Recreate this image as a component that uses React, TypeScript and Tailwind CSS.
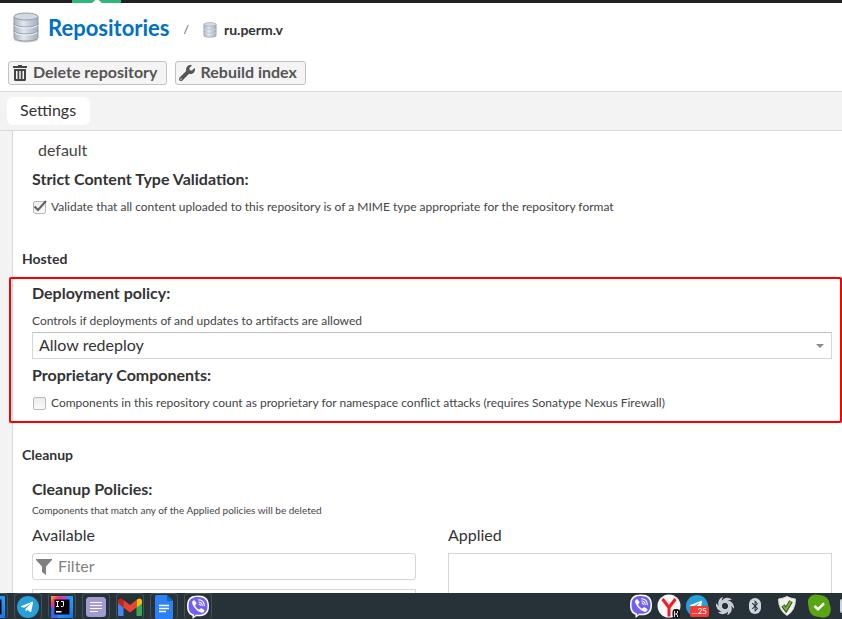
import React from "react";
import type { ReactNode } from "react";
import { FaBluetoothB, FaTelegramPlane, FaWrench } from "react-icons/fa";

function DatabaseIcon({ className }: { className: string }) {
  return (
    <svg className={className} viewBox="0 0 26 31" aria-hidden="true">
      <defs>
        <linearGradient id="metal" x1="0" x2="1" y1="0" y2="0">
          <stop offset="0" stopColor="#a9b3bf" />
          <stop offset="0.4" stopColor="#e1e6ec" />
          <stop offset="1" stopColor="#a3adb9" />
        </linearGradient>
      </defs>
      <ellipse cx="13" cy="27.5" rx="12" ry="3" fill="#9a9a9a" opacity="0.5" />
      <path d="M1 4.5v21c0 2 5 3.500 12 3.500s12-1.500 12-3.500v-21z" fill="url(#metal)" stroke="#919cab" />
      <ellipse cx="13" cy="4.500" rx="12" ry="3.500" fill="#d3d9e1" stroke="#919cab" />
      <path d="M1 11.500c0 2 5 3.500 12 3.500s12-1.500 12-3.500M1 18.500c0 2 5 3.500 12 3.500s12-1.500 12-3.500" fill="none" stroke="#8b96a4" />
      <path d="M1.500 13c1 1.800 5.500 3 11.500 3s10.500-1.200 11.500-3M1.500 20c1 1.800 5.500 3 11.500 3s10.500-1.200 11.500-3" fill="none" stroke="#f5f7fa" />
    </svg>
  );
}

function TrashIcon() {
  return (
    <svg className="h-4 w-[14px]" viewBox="0 0 14 16" fill="#444" aria-hidden="true">
      <path d="M5 0h4v1h4.500q.5 0 .5.500V3H0V1.500Q0 1 .5 1H5z" />
      <path fillRule="evenodd" d="M1 4h12v10.500q0 1.500-1.500 1.500h-9Q1 16 1 14.500zM3 6v8h1.500V6zM6.250 6v8h1.500V6zM9.500 6v8H11V6z" />
    </svg>
  );
}

function ViberIcon() {
  return (
    <svg className="size-6" viewBox="0 0 24 24" aria-hidden="true">
      <path d="M12 .5C4.500.5 1 3.500 1 11c0 5.500 2 8.700 5.500 9.800V24l3.500-2.700h2c7.500 0 11-3 11-10.300S19.500.5 12 .5z" fill="#fff" />
      <path d="M12 2C5.500 2 2.500 4.500 2.500 11c0 5 2 7.500 5.500 8.500v2l2-1.700h2c6.500 0 9.500-2.500 9.500-8.800S18.500 2 12 2z" fill="#7360f2" />
      <path d="M7.300 5.500c.7-.4 1.300-.2 1.700.4l1.300 1.900c.4.700.2 1.200-.4 1.700-.8.600-.9 1-.5 1.800.7 1.400 1.700 2.400 3 3 .8.400 1.200.2 1.700-.5.500-.7 1.100-.8 1.800-.4l1.900 1.300c.7.500.8 1.100.4 1.800-.8 1.300-1.800 1.700-3.200 1.100-4-1.800-6.900-4.700-8.600-8.700-.6-1.500-.3-2.600.9-3.400z" fill="#fff" />
      <path d="M12.500 4.800c3.700.1 5.700 2.200 5.800 6M12.800 7c2.200.2 3.300 1.400 3.400 3.600M13 9c.8.100 1.200.5 1.300 1.400" fill="none" stroke="#fff" strokeLinecap="round" strokeWidth="1.100" />
    </svg>
  );
}

function IdeaIcon() {
  return (
    <svg className="size-[22px]" viewBox="0 0 22 22" aria-hidden="true">
      <defs>
        <linearGradient id="idea" x1="0" x2="1" y1="0" y2="1">
          <stop offset="0" stopColor="#fcb02a" />
          <stop offset="0.200" stopColor="#f0307c" />
          <stop offset="0.450" stopColor="#8a5cf5" />
          <stop offset="0.700" stopColor="#1b8bff" />
          <stop offset="1" stopColor="#1672e8" />
        </linearGradient>
      </defs>
      <path d="M0 0h22v22H0z" fill="url(#idea)" />
      <path d="M15 0h7v15l-3-8z" fill="#1d98fb" />
      <path d="M0 10l7 7-1 5H0z" fill="#3268e8" />
      <path d="M3.500 3.500h15v15h-15z" fill="#0b0509" />
      <path d="M5 5.500h3M5 10.500h3M6.500 5.500v5M10 5.500h2.500v4q0 1-1 1H10" fill="none" stroke="#fff" />
      <path d="M5 15h5.500v1.500H5z" fill="#fff" />
    </svg>
  );
}

function TelegramIcon() {
  return (
    <span className="flex size-[22px] items-center justify-center rounded-full bg-[#279fd9] text-white">
      <FaTelegramPlane className="mr-0.5 size-3.5" />
    </span>
  );
}

function NotesIcon() {
  return (
    <svg className="size-5" viewBox="0 0 20 20" aria-hidden="true">
      <rect width="20" height="20" rx="3.500" fill="#a49bd5" />
      <path d="M4 5.500h12M4 8.500h12M4 11.500h12M4 14.500h8" stroke="#fff" strokeWidth="1.200" />
    </svg>
  );
}

function GmailIcon() {
  return (
    <svg className="h-[18px] w-6" viewBox="0 0 24 18" aria-hidden="true">
      <path d="M0 4l5.500 4v10H1.500Q0 18 0 16.500z" fill="#4285f4" />
      <path d="M24 4l-5.500 4v10h4q1.500 0 1.500-1.500z" fill="#34a853" />
      <path d="M18.500 2l1.300-1C21.500-.3 24 .6 24 3v2.500L18.500 9.600z" fill="#fbbc04" />
      <path d="M5.500 2L4.200 1C2.500-.3 0 .6 0 3v2.500l5.500 4.100z" fill="#c5221f" />
      <path d="M5.500 2L12 6.900 18.500 2v7.600L12 14.500 5.500 9.600z" fill="#ea4335" />
    </svg>
  );
}

function DocsIcon() {
  return (
    <svg className="h-6 w-[18px]" viewBox="0 0 18 24" aria-hidden="true">
      <path d="M1.500 0H12l6 6v16.500q0 1.500-1.500 1.500h-15Q0 24 0 22.500v-21Q0 0 1.500 0z" fill="#2e80f5" />
      <path d="M12 0l6 6h-6z" fill="#1260cc" />
      <path d="M4 10.500h10M4 13.500h10M4 16.500h7" stroke="#fff" strokeWidth="1.500" />
    </svg>
  );
}

function YandexIcon() {
  return (
    <svg className="size-6" viewBox="0 0 24 24" aria-hidden="true">
      <circle cx="12" cy="12" r="11.500" fill="#f7f7f7" />
      <path d="M5.500 5l6.500 8.500L18.500 5M12 13v9.500" fill="none" stroke="#f11d24" strokeWidth="3" />
      <rect x="15.500" y="15" width="7.500" height="9" rx="3" fill="#151515" />
      <path d="M17.500 17v6M20.500 17v2l-2 1 2 1v2" fill="none" stroke="#ddd" />
    </svg>
  );
}

function SwirlIcon() {
  return (
    <svg className="size-[18px]" viewBox="0 0 18 18" aria-hidden="true">
      {[0, 60, 120, 180, 240, 300].map((angle) => (
        <path key={angle} d="M5 9.500Q3.500 4.500 7.500 2 11.500-.5 16 2.500 11.500 3 9.500 5.800 6.500 6 5 9.500z" fill="#c9ced6" transform={`rotate(${angle} 9 9)`} />
      ))}
      <circle cx="9" cy="9" r="2.800" fill="#263238" />
    </svg>
  );
}

function ShieldIcon() {
  return (
    <svg className="h-5 w-[18px]" viewBox="0 0 18 20" aria-hidden="true">
      <path d="M9 .5Q13 2.500 17.500 3 17.500 14.500 9 19.500.5 14.500.5 3 5 2.500 9 .5z" fill="#eff1ec" stroke="#d3d6cf" />
      <path d="M5 9.500l3 4.200 5-8.500" fill="none" stroke="#33521b" strokeWidth="4" />
      <path d="M5.300 10l2.700 3.500 4.800-8" fill="none" stroke="#7bb33a" strokeWidth="2" />
    </svg>
  );
}

function ApprovedIcon() {
  return (
    <svg className="size-6" viewBox="0 0 24 24" aria-hidden="true">
      <path d="M7 .7q2-.7 4 .2 11-.5 12 10.600 1 2 .7 5.500-1 6-6.700 6.600-2 .4-4-.6Q2 23 1.500 12-1 3 7 .7z" fill="#5aa516" />
      <path d="M7.500 12l3.500 3.300 6-6" fill="none" stroke="#fff" strokeWidth="2.500" />
    </svg>
  );
}

function Task({ label, children }: { label: string; children?: ReactNode }) {
  return (
    <button aria-label={label} className="flex h-[26px] w-7 shrink-0 items-center justify-center overflow-hidden rounded-sm border border-b-0 border-[#435057]">
      {children}
    </button>
  );
}

function TrayItem({ label, wide, children }: { label: string; wide?: boolean; children: ReactNode }) {
  return (
    <button aria-label={label} className={`relative flex h-[26px] shrink-0 items-center justify-center ${wide ? "w-8" : "w-7"}`}>
      {children}
    </button>
  );
}

function SectionTitle({ children }: { children: ReactNode }) {
  return <h2 className="text-sm leading-5 font-bold">{children}</h2>;
}

function FieldTitle({ children }: { children: ReactNode }) {
  return <h3 className="pb-0.5 text-base leading-[22px] font-bold">{children}</h3>;
}

function CheckField({ id, checked, children }: { id: string; checked?: boolean; children: ReactNode }) {
  return (
    <div className="mt-[5px] flex h-5 items-center gap-[5px] pl-px">
      <span className="relative flex">
        <input
          id={id}
          type="checkbox"
          defaultChecked={checked}
          className="peer size-[13px] appearance-none rounded-xs border border-[#b9b9b9] bg-linear-to-b from-[#ececec] to-[#fafafa]"
        />
        <svg className="pointer-events-none invisible absolute -top-px left-0 h-3 w-3.5 peer-checked:visible" viewBox="0 0 14 12" aria-hidden="true">
          <path d="M1.500 6.500L5 10 13 1" fill="none" stroke="#606060" strokeWidth="2" />
        </svg>
      </span>
      <label htmlFor={id} className="text-xs whitespace-nowrap text-[#444]">{children}</label>
    </div>
  );
}

export default function App() {
  return (
    <div className="flex h-screen flex-col overflow-hidden bg-white font-['Lato','Liberation_Sans',sans-serif] text-[#333]">
      <div className="h-[3px] shrink-0 bg-[#222] pl-[72px]">
        <div className="flex h-full w-[49px] items-end justify-center bg-[#2db77b]">
          <svg className="h-[3px] w-2.5" viewBox="0 0 10 3" aria-hidden="true">
            <path d="M0 3l3.500-3h3L10 3z" fill="#fff" />
          </svg>
        </div>
      </div>

      <header className="shrink-0 border-b border-[#d8d8d8] px-2 pb-1.5">
        <nav className="flex h-[58px] items-start pt-[9px] pl-[5px]">
          <DatabaseIcon className="h-[31px] w-[26px]" />
          <a href="#repositories" className="ml-[9px] text-[22px] leading-8 font-bold text-[#0070c5]">Repositories</a>
          <span className="ml-3.5 pt-1.5 text-xs leading-6 text-[#555]">/</span>
          <DatabaseIcon className="mt-2.5 ml-3.5 h-4 w-3.5" />
          <span className="ml-[7px] pt-1.5 text-sm leading-6 font-bold">ru.perm.v</span>
        </nav>
        <div className="flex gap-2">
          <button className="flex h-6 items-center gap-1.5 rounded-[3px] border border-[#c2c2c2] bg-[#f4f4f4] pr-2 pl-1 text-base leading-5 font-bold text-[#555]">
            <TrashIcon />
            <span className="pb-0.5">Delete repository</span>
          </button>
          <button className="flex h-6 items-center gap-1.5 rounded-[3px] border border-[#c2c2c2] bg-[#f4f4f4] pr-2 pl-[3px] text-base leading-5 font-bold text-[#555]">
            <FaWrench className="size-4" />
            <span className="pb-0.5">Rebuild index</span>
          </button>
        </div>
      </header>

      <div className="flex h-[39px] shrink-0 items-center border-b border-[#d8d8d8] bg-[#f3f3f3] pl-[7px]">
        <button className="h-7 rounded-md bg-white pr-3.5 pb-0.5 pl-[13px] text-base leading-5">Settings</button>
      </div>

      <main className="flex min-h-0 flex-1 overflow-hidden bg-[#f3f3f3] pl-3">
        <form className="min-w-0 flex-1 border-l border-[#d8d8d8] bg-white pt-2">
          <div className="px-[19px]">
            <p className="pb-0.5 pl-1.5 text-base leading-[22px] text-[#444]">default</p>
            <div className="mt-[5px]"><FieldTitle>Strict Content Type Validation:</FieldTitle></div>
            <CheckField id="mime" checked>
              Validate that all content uploaded to this repository is of a MIME type appropriate for the repository format
            </CheckField>
          </div>

          <div className="mt-8 pl-[9px]"><SectionTitle>Hosted</SectionTitle></div>
          <section className="mt-2 -ml-1 rounded-xs border-2 border-[#fa0000] pt-[3px] pr-2 pb-2 pl-[21px]">
            <FieldTitle>Deployment policy:</FieldTitle>
            <label htmlFor="policy" className="mt-[5px] block text-xs leading-5 text-[#444]">
              Controls if deployments of and updates to artifacts are allowed
            </label>
            <div className="relative mt-px mb-[5px] flex items-center">
              <select id="policy" className="h-[27px] w-full appearance-none border border-[#d6d6d6] border-t-[#bfbfbf] bg-white px-1.5 pb-0.5 text-base leading-5">
                <option>Allow redeploy</option>
              </select>
              <svg className="pointer-events-none absolute right-2 h-1 w-2" viewBox="0 0 8 4" aria-hidden="true">
                <path d="M0 0h8L4 4z" fill="#8a8a8a" />
              </svg>
            </div>
            <FieldTitle>Proprietary Components:</FieldTitle>
            <CheckField id="proprietary">
              Components in this repository count as proprietary for namespace conflict attacks (requires Sonatype Nexus Firewall)
            </CheckField>
          </section>

          <div className="mt-[22px] pl-[9px]"><SectionTitle>Cleanup</SectionTitle></div>
          <div className="mt-[13px] pr-2.5 pl-[19px]">
            <FieldTitle>Cleanup Policies:</FieldTitle>
            <p className="text-[10px] leading-4 text-[#444]">Components that match any of the Applied policies will be deleted</p>
            <div className="mt-1.5 grid grid-cols-2 gap-8">
              <div>
                <label htmlFor="filter" className="block pb-0.5 text-base leading-[22px]">Available</label>
                <div className="mt-[5px] flex h-[27px] items-center rounded-[3px] border border-[#d6d6d6] pl-[3px]">
                  <svg className="h-4 w-4" viewBox="0 0 16 16" aria-hidden="true">
                    <path d="M0 0h16v1L10 7.500V16l-4-3V7.500L0 1z" fill="#808080" />
                  </svg>
                  <input id="filter" placeholder="Filter" className="ml-1.5 min-w-0 flex-1 pb-0.5 text-base leading-5 outline-none placeholder:text-[#808080]" />
                </div>
                <div className="mt-[9px] h-40 border border-[#d6d6d6]" />
              </div>
              <div>
                <h4 className="pb-0.5 text-base leading-[22px]">Applied</h4>
                <div className="mt-[5px] h-40 border border-[#d6d6d6]" />
              </div>
            </div>
          </div>
        </form>
      </main>

      <footer className="relative flex h-[26px] shrink-0 justify-between overflow-hidden bg-[#263238]">
        <div className="-ml-5 flex gap-1.5">
          <Task label="IntelliJ IDEA"><IdeaIcon /></Task>
          <Task label="Telegram"><TelegramIcon /></Task>
          <Task label="IntelliJ IDEA"><IdeaIcon /></Task>
          <Task label="Notes"><NotesIcon /></Task>
          <Task label="Gmail"><GmailIcon /></Task>
          <Task label="Docs"><DocsIcon /></Task>
          <Task label="Viber"><ViberIcon /></Task>
        </div>
        <div className="flex items-center">
          <TrayItem label="Viber"><ViberIcon /></TrayItem>
          <TrayItem label="Yandex"><YandexIcon /></TrayItem>
          <TrayItem label="Telegram, unread messages">
            <TelegramIcon />
            <span className="absolute right-0.5 bottom-0.5 rounded-xs bg-[#f23c34] px-0.5 text-[8px] leading-[11px] text-white">...25</span>
          </TrayItem>
          <TrayItem label="Graphics"><SwirlIcon /></TrayItem>
          <TrayItem label="Bluetooth" wide>
            <span className="flex h-4 w-3 items-center justify-center rounded-md bg-[#cfd5df] text-[#263238]">
              <FaBluetoothB className="size-3" />
            </span>
          </TrayItem>
          <TrayItem label="Protection" wide><ShieldIcon /></TrayItem>
          <TrayItem label="Status" wide><ApprovedIcon /></TrayItem>
          <span className="ml-[5px] h-3.5 w-0.5 rounded-l-xs bg-[#cfd5df]" />
        </div>
      </footer>
    </div>
  );
}
